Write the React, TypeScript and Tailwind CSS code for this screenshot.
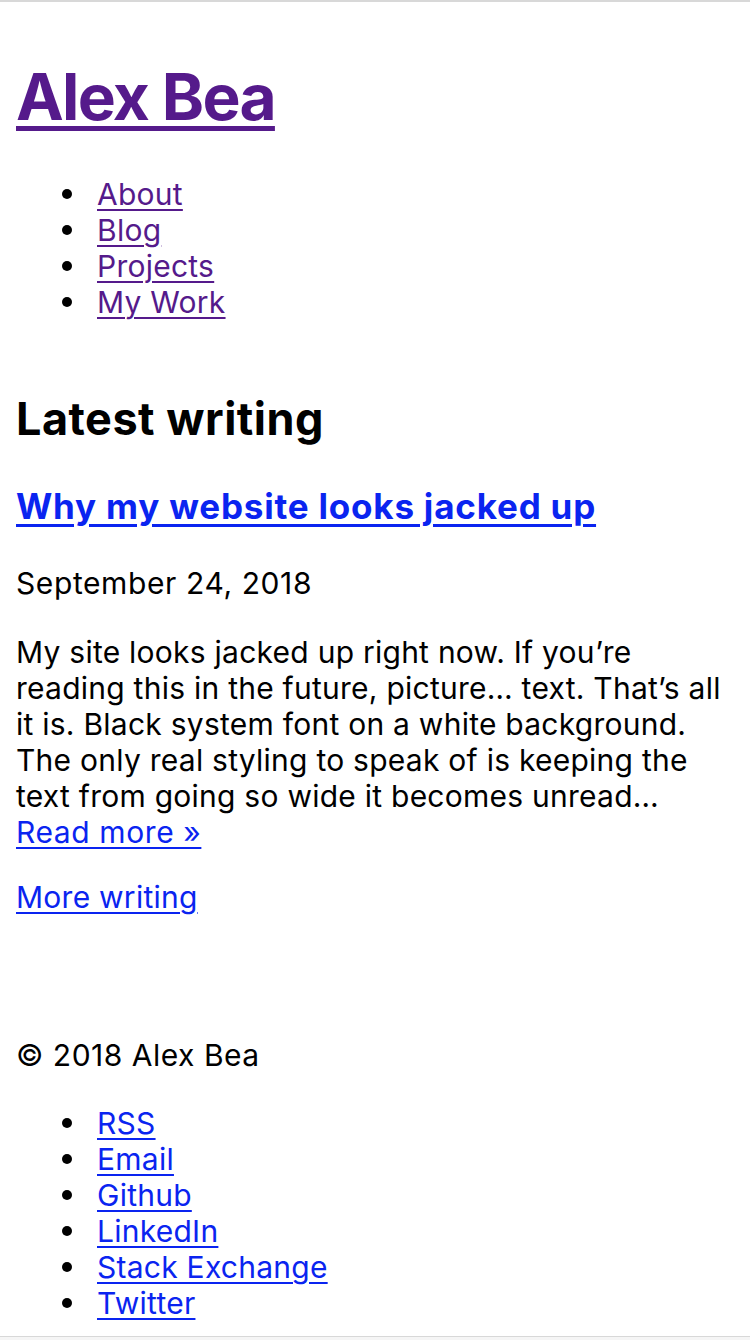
import React from 'react';

const nav = ['About', 'Blog', 'Projects', 'My Work'];
const social = ['RSS', 'Email', 'Github', 'LinkedIn', 'Stack Exchange', 'Twitter'];

const excerpt = [
  'My site looks jacked up right now. If you’re',
  'reading this in the future, picture… text. That’s all',
  'it is. Black system font on a white background.',
  'The only real styling to speak of is keeping the',
  'text from going so wide it becomes unread…',
];

function LinkList({ items, color }: { items: string[]; color: string }) {
  return (
    <ul className="pl-[46px]">
      {items.map((item) => (
        <li key={item} className="flex items-center">
          <span className="w-[10px] h-[10px] rounded-full bg-black mr-[25px] shrink-0" />
          <a href="#" className={`${color} underline decoration-[2px] underline-offset-[4px]`}>
            {item}
          </a>
        </li>
      ))}
    </ul>
  );
}

export default function App() {
  return (
    <div className="min-h-[1340px] bg-white text-black font-['Inter','Liberation_Sans',sans-serif] text-[30px] leading-[36px] tracking-[0.25px] flex flex-col">
      <div className="h-[2px] bg-[#d8d8d8]" />
      <div className="px-4 flex-1">
        <header>
          <h1 className="mt-[57px] text-[64px] leading-[76px] font-bold tracking-[-1.7px]">
            <a href="#" className="text-[#551a8b] underline decoration-[5px] underline-offset-[6px]">
              Alex Bea
            </a>
          </h1>
          <div className="mt-[41px]">
            <LinkList items={nav} color="text-[#551a8b]" />
          </div>
        </header>

        <main>
          <h2 className="mt-[72px] text-[45px] leading-[54px] font-bold tracking-[0.5px]">Latest writing</h2>
          <article>
            <h3 className="mt-[39px] text-[35px] leading-[42px] font-bold tracking-[0.8px]">
              <a href="#" className="text-[#0a24f0] underline decoration-[3px] underline-offset-[5px]">
                Why my website looks jacked up
              </a>
            </h3>
            <p className="mt-[38px] tracking-[0.6px]">September 24, 2018</p>
            <p className="mt-[33px]">
              {excerpt.map((line) => (
                <span key={line} className="block whitespace-nowrap">
                  {line}
                </span>
              ))}
              <a href="#" className="text-[#0a24f0] underline decoration-[2px] underline-offset-[4px] tracking-[0.6px]">
                Read more »
              </a>
            </p>
          </article>
          <p className="mt-[29px]">
            <a href="#" className="text-[#0a24f0] underline decoration-[2px] underline-offset-[4px]">
              More writing
            </a>
          </p>
        </main>

        <footer>
          <p className="mt-[122px] tracking-[0.5px]">© 2018 Alex Bea</p>
          <div className="mt-[32px]">
            <LinkList items={social} color="text-[#0a24f0]" />
          </div>
        </footer>
      </div>
      <div className="h-[1px] bg-[#d8d8d8]" />
      <div className="h-[3px] bg-[#f5f5f5]" />
    </div>
  );
}
